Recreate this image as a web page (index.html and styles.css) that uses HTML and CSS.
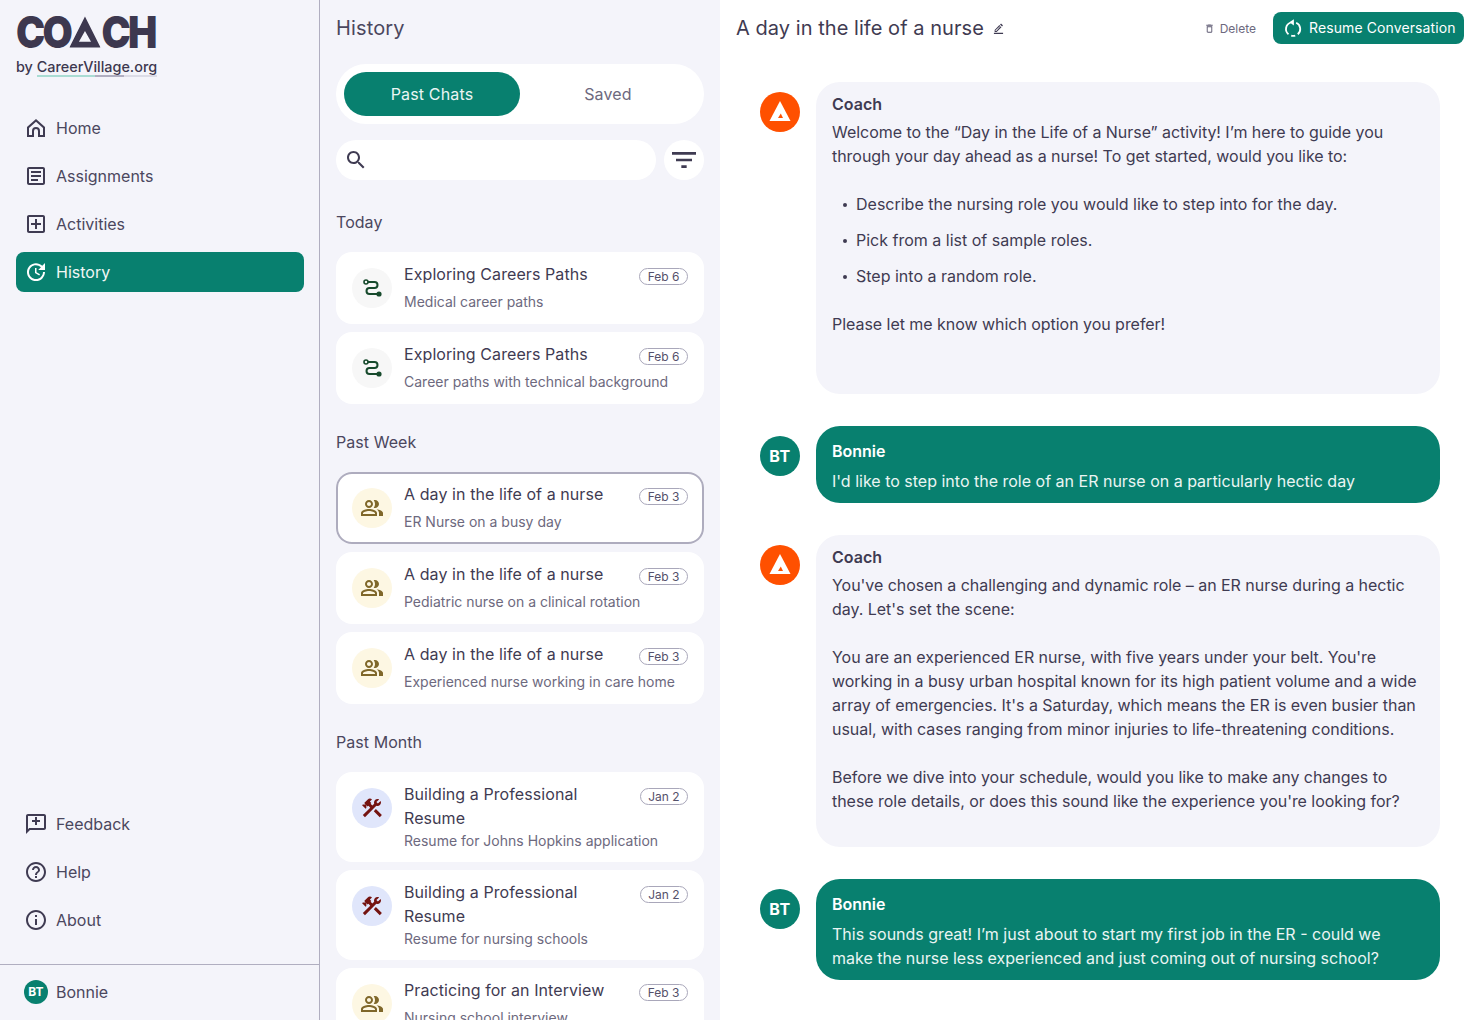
FILE: index.html
```html
<!DOCTYPE html>
<html lang="en">

<head>
    <meta charset="UTF-8">
    <meta name="viewport" content="width=device-width, initial-scale=1.0">
    <title>Coach</title>
    <link rel="stylesheet" href="styles.css">
</head>

<body>
    <!-- shared icons -->
    <svg class="sprite" xmlns="http://www.w3.org/2000/svg">
        <symbol id="i-route" viewBox="0 0 24 24">
            <circle cx="6" cy="6" r="2" fill="none" stroke="currentColor" stroke-width="1.6" />
            <path d="M8 6h6.5a3 3 0 0 1 0 6h-5a3 3 0 0 0 0 6H17" fill="none" stroke="currentColor" stroke-width="2" />
            <circle cx="19" cy="18" r="2.6" fill="currentColor" />
        </symbol>
        <symbol id="i-people" viewBox="0 0 24 24">
            <path fill="currentColor"
                d="M16.67 13.13C18.04 14.06 19 15.32 19 17v3h4v-3c0-2.18-3.57-3.47-6.33-3.87zM15 12c2.21 0 4-1.79 4-4s-1.79-4-4-4c-.47 0-.91.1-1.33.24C14.5 5.27 15 6.58 15 8s-.5 2.73-1.33 3.76c.42.14.86.24 1.33.24zM9 12c2.21 0 4-1.79 4-4s-1.79-4-4-4-4 1.79-4 4 1.79 4 4 4zm0-6c1.1 0 2 .9 2 2s-.9 2-2 2-2-.9-2-2 .9-2 2-2zM9 13c-2.67 0-8 1.34-8 4v3h16v-3c0-2.66-5.33-4-8-4zm6 5H3v-.99C3.2 16.29 6.3 15 9 15s5.8 1.29 6 2v1z" />
        </symbol>
        <symbol id="i-tools" viewBox="0 0 24 24">
            <path fill="currentColor"
                d="m13.78 15.17 2.12-2.12 6 6-2.12 2.12zM17.5 10c1.93 0 3.5-1.57 3.5-3.5 0-.58-.16-1.12-.41-1.6l-2.7 2.7-1.49-1.49 2.7-2.7c-.48-.25-1.02-.41-1.6-.41C15.57 3 14 4.57 14 6.5c0 .41.08.8.21 1.16l-1.85 1.85-1.78-1.78.71-.71-1.41-1.41L12 3.49c-1.17-1.17-3.07-1.17-4.24 0L4.22 7.03l1.41 1.41H2.81l-.71.71 3.54 3.54.71-.71V9.15l1.41 1.41.71-.71 1.78 1.78-7.41 7.41 2.12 2.12L16.34 9.79c.36.13.75.21 1.16.21z" />
        </symbol>
        <symbol id="i-coach" viewBox="0 0 40 40">
            <circle cx="20" cy="20" r="20" fill="#ff5000" />
            <path fill="#fff" d="M20 9 30.500 29h-21z" />
            <path fill="#ff5000" d="M20.800 21.500 23 26h-5z" />
        </symbol>
    </svg>

    <aside class="sidebar">
        <div class="logo">
            <div class="logo-word">CO<svg class="logo-a" viewBox="0 0 36 32" role="img" aria-label="A"><path fill-rule="evenodd" d="M18 0 36 32H0zM18 15 11 26h14z" /></svg>CH</div>
            <div class="logo-by">by <span class="logo-org">CareerVillage.org</span></div>
        </div>

        <nav class="nav">
            <a class="nav-item"><svg viewBox="0 0 24 24"><path fill-rule="evenodd" d="M12 3 3 11v10h7v-6a2 2 0 0 1 4 0v6h7V11zM19 19h-3v-4a4 4 0 0 0-8 0v4H5v-7.100l7-6.200 7 6.200z" /></svg>Home</a>
            <a class="nav-item"><svg viewBox="0 0 24 24"><path d="M19 5v14H5V5h14m0-2H5c-1.100 0-2 .9-2 2v14c0 1.100.9 2 2 2h14c1.100 0 2-.9 2-2V5c0-1.100-.9-2-2-2zM14 17H7v-2h7v2zm3-4H7v-2h10v2zm0-4H7V7h10v2z" /></svg>Assignments</a>
            <a class="nav-item"><svg viewBox="0 0 24 24"><path d="M19 3H5c-1.110 0-2 .9-2 2v14c0 1.100.89 2 2 2h14c1.100 0 2-.9 2-2V5c0-1.100-.9-2-2-2zm0 16H5V5h14v14zm-8-2h2v-4h4v-2h-4V7h-2v4H7v2h4z" /></svg>Activities</a>
            <a class="nav-item active"><svg viewBox="0 0 24 24"><path d="M21 10.120h-6.780l2.740-2.820c-2.730-2.700-7.150-2.800-9.880-.1-2.730 2.710-2.730 7.080 0 9.790s7.150 2.710 9.880 0C18.320 15.650 19 14.080 19 12.100h2c0 1.980-.88 4.550-2.640 6.290-3.510 3.480-9.210 3.480-12.720 0-3.500-3.470-3.530-9.110-.02-12.580s9.140-3.470 12.650 0L21 3v7.12zM12.500 8v4.250l3.500 2.080-.72 1.210L11 13V8h1.500z" /></svg>History</a>
        </nav>

        <nav class="nav nav-bottom">
            <a class="nav-item"><svg viewBox="0 0 24 24"><path d="M20 2H4c-1.100 0-2 .9-2 2v18l4-4h14c1.100 0 2-.9 2-2V4c0-1.100-.9-2-2-2zm0 14H5.170L4 17.170V4h16v12zM11 5h2v3h3v2h-3v3h-2v-3H8V8h3z" /></svg>Feedback</a>
            <a class="nav-item"><svg viewBox="0 0 24 24"><path d="M11 18h2v-2h-2v2zm1-16C6.480 2 2 6.480 2 12s4.480 10 10 10 10-4.480 10-10S17.520 2 12 2zm0 18c-4.410 0-8-3.590-8-8s3.590-8 8-8 8 3.590 8 8-3.590 8-8 8zm0-14c-2.210 0-4 1.790-4 4h2c0-1.100.9-2 2-2s2 .9 2 2c0 2-3 1.750-3 5h2c0-2.250 3-2.500 3-5 0-2.210-1.790-4-4-4z" /></svg>Help</a>
            <a class="nav-item"><svg viewBox="0 0 24 24"><path d="M11 7h2v2h-2zm0 4h2v6h-2zm1-9C6.480 2 2 6.480 2 12s4.480 10 10 10 10-4.480 10-10S17.520 2 12 2zm0 18c-4.410 0-8-3.590-8-8s3.590-8 8-8 8 3.590 8 8-3.590 8-8 8z" /></svg>About</a>
        </nav>

        <div class="user">
            <span class="user-avatar">BT</span>Bonnie
        </div>
    </aside>

    <section class="history">
        <h2 class="history-title">History</h2>

        <div class="tabs">
            <button class="tab active">Past Chats</button>
            <button class="tab">Saved</button>
        </div>

        <div class="search-row">
            <div class="search">
                <svg viewBox="0 0 24 24"><path d="M15.500 14h-.79l-.28-.27C15.410 12.590 16 11.110 16 9.500 16 5.910 13.090 3 9.500 3S3 5.910 3 9.500 5.910 16 9.500 16c1.610 0 3.090-.59 4.230-1.570l.27.28v.79l5 4.990L20.490 19l-4.990-5zm-6 0C7.010 14 5 11.990 5 9.500S7.010 5 9.500 5 14 7.010 14 9.500 11.990 14 9.500 14z" /></svg>
            </div>
            <div class="filter">
                <svg viewBox="0 0 24 24"><path d="M10 18h4v-2h-4v2zM3 6v2h18V6H3zm3 7h12v-2H6v2z" /></svg>
            </div>
        </div>

        <h3 class="group-title">Today</h3>
        <div class="cards">
            <div class="card">
                <span class="card-icon route"><svg><use href="#i-route" /></svg></span>
                <div class="card-body">
                    <div class="card-top"><span class="card-title">Exploring Careers Paths</span><span class="date">Feb 6</span></div>
                    <div class="card-sub">Medical career paths</div>
                </div>
            </div>
            <div class="card">
                <span class="card-icon route"><svg><use href="#i-route" /></svg></span>
                <div class="card-body">
                    <div class="card-top"><span class="card-title">Exploring Careers Paths</span><span class="date">Feb 6</span></div>
                    <div class="card-sub">Career paths with technical background</div>
                </div>
            </div>
        </div>

        <h3 class="group-title">Past Week</h3>
        <div class="cards">
            <div class="card selected">
                <span class="card-icon people"><svg><use href="#i-people" /></svg></span>
                <div class="card-body">
                    <div class="card-top"><span class="card-title">A day in the life of a nurse</span><span class="date">Feb 3</span></div>
                    <div class="card-sub">ER Nurse on a busy day</div>
                </div>
            </div>
            <div class="card">
                <span class="card-icon people"><svg><use href="#i-people" /></svg></span>
                <div class="card-body">
                    <div class="card-top"><span class="card-title">A day in the life of a nurse</span><span class="date">Feb 3</span></div>
                    <div class="card-sub">Pediatric nurse on a clinical rotation</div>
                </div>
            </div>
            <div class="card">
                <span class="card-icon people"><svg><use href="#i-people" /></svg></span>
                <div class="card-body">
                    <div class="card-top"><span class="card-title">A day in the life of a nurse</span><span class="date">Feb 3</span></div>
                    <div class="card-sub">Experienced nurse working in care home</div>
                </div>
            </div>
        </div>

        <h3 class="group-title">Past Month</h3>
        <div class="cards">
            <div class="card tall">
                <span class="card-icon tools"><svg><use href="#i-tools" /></svg></span>
                <div class="card-body">
                    <div class="card-top"><span class="card-title">Building a Professional Resume</span><span class="date">Jan 2</span></div>
                    <div class="card-sub">Resume for Johns Hopkins application</div>
                </div>
            </div>
            <div class="card tall">
                <span class="card-icon tools"><svg><use href="#i-tools" /></svg></span>
                <div class="card-body">
                    <div class="card-top"><span class="card-title">Building a Professional Resume</span><span class="date">Jan 2</span></div>
                    <div class="card-sub">Resume for nursing schools</div>
                </div>
            </div>
            <div class="card">
                <span class="card-icon people"><svg><use href="#i-people" /></svg></span>
                <div class="card-body">
                    <div class="card-top"><span class="card-title">Practicing for an Interview</span><span class="date">Feb 3</span></div>
                    <div class="card-sub">Nursing school interview</div>
                </div>
            </div>
        </div>
    </section>

    <main class="chat">
        <header class="chat-head">
            <h1 class="chat-title">A day in the life of a nurse</h1>
            <svg class="edit" viewBox="0 0 24 24"><path d="M22 24H2v-2.500h20zM14 4.600l4.400 4.400L8 19.500H3.600v-4.400zm1.800 1.800L5.500 16v1.600h1.600L16.600 7.200zM15.300 3.300l1.600-1.600c.4-.4 1-.4 1.400 0l3 3c.4.4.4 1 0 1.400l-1.600 1.600z" /></svg>
            <button class="delete">
                <svg viewBox="0 0 24 24"><path d="M6 19c0 1.100.9 2 2 2h8c1.100 0 2-.9 2-2V7H6zM8 9h8v10H8zm7.500-5-1-1h-5l-1 1H5v2h14V4z" /></svg>Delete
            </button>
            <button class="resume">
                <svg viewBox="0 0 20 20" fill="none" stroke="currentColor" stroke-width="2">
                    <path d="M7.500 3.900A7.600 7.600 0 0 0 5 17" />
                    <path d="M13.500 4.200A7.600 7.600 0 0 1 15.300 17" />
                    <path d="M8 18.500a7.600 7.600 0 0 0 4.500 0" />
                    <path d="M11 .2v7L6 3.700z" fill="currentColor" stroke="none" />
                </svg><span class="resume-text">Resume Conversation</span>
            </button>
        </header>

        <div class="messages">
            <div class="msg">
                <svg class="avatar"><use href="#i-coach" /></svg>
                <div class="bubble coach">
                    <div class="name">Coach</div>
                    <p>Welcome to the “Day in the Life of a Nurse” activity! I’m here to guide you through your day ahead as a nurse! To get started, would you like to:</p>
                    <ul>
                        <li>Describe the nursing role you would like to step into for the day.</li>
                        <li>Pick from a list of sample roles.</li>
                        <li>Step into a random role.</li>
                    </ul>
                    <p>Please let me know which option you prefer!</p>
                    <p class="blank"></p>
                </div>
            </div>

            <div class="msg">
                <span class="avatar avatar-user">BT</span>
                <div class="bubble user-msg">
                    <div class="name">Bonnie</div>
                    <p>I'd like to step into the role of an ER nurse on a particularly hectic day</p>
                </div>
            </div>

            <div class="msg">
                <svg class="avatar"><use href="#i-coach" /></svg>
                <div class="bubble coach">
                    <div class="name">Coach</div>
                    <p>You've chosen a challenging and dynamic role – an ER nurse during a hectic day. Let's set the scene:</p>
                    <p>You are an experienced ER nurse, with five years under your belt. You're working in a busy urban hospital known for its high patient volume and a wide array of emergencies. It's a Saturday, which means the ER is even busier than usual, with cases ranging from minor injuries to life-threatening conditions.</p>
                    <p>Before we dive into your schedule, would you like to make any changes to these role details, or does this sound like the experience you're looking for?</p>
                </div>
            </div>

            <div class="msg">
                <span class="avatar avatar-user">BT</span>
                <div class="bubble user-msg">
                    <div class="name">Bonnie</div>
                    <p>This sounds great! I’m just about to start my first job in the ER - could we make the nurse less experienced and just coming out of nursing school?</p>
                </div>
            </div>
        </div>
    </main>
</body>

</html>
```

FILE: styles.css
```css
* {
    box-sizing: border-box;
}

body {
    margin: 0;
    height: 100vh;
    display: flex;
    overflow: hidden;
    font-family: "Inter", "Liberation Sans", sans-serif;
    font-size: 16px;
    color: #3f3b52;
    background-color: #fff;
}

.sprite {
    display: none;
}

button {
    font-family: inherit;
    border: none;
    cursor: pointer;
}

/* sidebar */
.sidebar {
    width: 320px;
    flex-shrink: 0;
    height: 100%;
    display: flex;
    flex-direction: column;
    background-color: #f4f4fa;
    border-right: 1px solid #b0aec0;
}

.logo {
    padding: 16px 16px 0;
    height: 100px;
    color: #3d384f;
}

.logo-word {
    display: flex;
    align-items: center;
    height: 32px;
    font-size: 44px;
    line-height: 32px;
    font-weight: 900;
    letter-spacing: -3px;
    transform: scaleX(0.89);
    transform-origin: left center;
}

.logo-a {
    width: 35px;
    height: 32px;
    margin: 0 1px 0 -1px;
    fill: #3d384f;
}

.logo-by {
    margin-top: 9px;
    font-size: 14.4px;
    line-height: 20px;
    font-weight: 500;
}

.logo-org {
    border-bottom: 2px solid;
    border-image: linear-gradient(90deg, #a9dcd3 0 48%, #b0aec0 48% 72%, #dcdce6 72% 100%) 1;
}

.nav {
    display: flex;
    flex-direction: column;
    gap: 8px;
    padding: 8px 15px 0 16px;
}

.nav-bottom {
    margin-top: auto;
    padding-top: 0;
    padding-bottom: 24px;
}

.nav-item {
    height: 40px;
    display: flex;
    align-items: center;
    gap: 8px;
    padding-left: 8px;
    border-radius: 8px;
    font-size: 16px;
    color: #4b475e;
}

.nav-item svg {
    width: 24px;
    height: 24px;
    fill: #3f3b52;
}

.nav-item.active {
    background-color: #08806f;
    color: #f0f7f5;
}

.nav-item.active svg {
    fill: #fff;
}

.user {
    height: 56px;
    display: flex;
    align-items: center;
    gap: 8px;
    padding: 0 0 2px 24px;
    border-top: 1px solid #b0aec0;
    color: #4b475e;
}

.user-avatar {
    width: 24px;
    height: 24px;
    border-radius: 50%;
    display: flex;
    align-items: center;
    justify-content: center;
    background-color: #08806f;
    color: #fff;
    font-size: 12px;
    font-weight: 700;
}

/* history column */
.history {
    width: 400px;
    flex-shrink: 0;
    height: 100%;
    overflow: hidden;
    padding: 0 16px;
    background-color: #f4f4fa;
}

.history-title {
    margin: 0;
    height: 64px;
    padding-top: 14px;
    font-size: 20px;
    line-height: 28px;
    font-weight: 400;
    letter-spacing: 0.15px;
    color: #4b475e;
}

.tabs {
    height: 60px;
    display: flex;
    padding: 8px;
    border-radius: 30px;
    background-color: #fff;
}

.tab {
    width: 176px;
    height: 44px;
    border-radius: 22px;
    background: none;
    font-size: 16px;
    letter-spacing: 0.15px;
    color: #6d697e;
}

.tab.active {
    background-color: #08806f;
    color: #eaf5f3;
}

.search-row {
    display: flex;
    gap: 8px;
    margin-top: 16px;
}

.search {
    flex: 1;
    height: 40px;
    display: flex;
    align-items: center;
    padding-left: 8px;
    border-radius: 20px;
    background-color: #fff;
}

.search svg {
    width: 24px;
    height: 24px;
    fill: #3f3b52;
}

.filter {
    width: 40px;
    height: 40px;
    display: flex;
    align-items: center;
    justify-content: center;
    border-radius: 50%;
    background-color: #fff;
}

.filter svg {
    width: 32px;
    height: 32px;
    fill: #3f3b52;
}

.group-title {
    margin: 0;
    height: 72px;
    padding-top: 30px;
    font-size: 16px;
    line-height: 24px;
    font-weight: 400;
    letter-spacing: 0.05px;
    color: #4b475e;
}

.cards {
    display: flex;
    flex-direction: column;
    gap: 8px;
}

.cards + .group-title {
    height: 68px;
    padding-top: 26px;
}

.card {
    min-height: 72px;
    display: flex;
    align-items: center;
    gap: 12px;
    padding: 0 16px;
    border-radius: 16px;
    background-color: #fff;
}

.card.tall {
    align-items: flex-start;
}

.card.tall .card-icon {
    margin-top: 16px;
}

.card.tall .card-body {
    padding-bottom: 11px;
}

.card.selected {
    box-shadow: inset 0 0 0 2px #aeacbe;
}

.card-icon {
    width: 40px;
    height: 40px;
    flex-shrink: 0;
    display: flex;
    align-items: center;
    justify-content: center;
    border-radius: 50%;
}

.card-icon svg {
    width: 24px;
    height: 24px;
}

.route {
    background-color: #f7f7f7;
    color: #174a2c;
}

.people {
    background-color: #fdf7e3;
    color: #7f672a;
}

.tools {
    background-color: #e0e6fb;
    color: #741310;
}

.card-body {
    flex: 1;
    min-width: 0;
    padding: 10px 0 12px;
}

.card-top {
    min-height: 30px;
    display: flex;
    justify-content: space-between;
    align-items: flex-start;
    gap: 16px;
    padding-bottom: 1px;
}

.card-title {
    line-height: 24px;
    letter-spacing: 0.08px;
    color: #3f3b52;
}

.date {
    flex-shrink: 0;
    height: 17px;
    margin-top: 6px;
    padding: 0 7.5px;
    border: 1px solid #a9a7ba;
    border-radius: 9px;
    font-size: 12px;
    line-height: 15px;
    color: #55516a;
}

.card-sub {
    font-size: 14px;
    line-height: 20px;
    color: #6d697e;
}

/* chat */
.chat {
    flex: 1;
    min-width: 0;
    height: 100%;
    overflow: hidden;
    padding: 0 16px;
}

.chat-head {
    height: 82px;
    display: flex;
    align-items: flex-start;
    padding-top: 12px;
}

.chat-title {
    margin: 0;
    font-size: 20px;
    line-height: 32px;
    font-weight: 400;
    letter-spacing: 0.05px;
}

.edit {
    width: 11px;
    height: 11px;
    margin: 11px auto 0 9px;
    fill: #3f3b52;
}

.delete {
    height: 32px;
    display: flex;
    align-items: center;
    gap: 5px;
    padding: 0;
    margin-right: 17px;
    background: none;
    font-size: 12px;
    color: #6d697e;
}

.delete svg {
    width: 11px;
    height: 11px;
    fill: #5b5770;
}

.resume {
    width: 191px;
    height: 32px;
    display: flex;
    align-items: center;
    gap: 7px;
    padding: 0 0 0 11px;
    border-radius: 8px;
    background-color: #08806f;
    color: #fff;
    font-size: 14px;
}

.resume svg {
    width: 18px;
    height: 18px;
}

.resume-text {
    padding-bottom: 2px;
    letter-spacing: 0.1px;
}

.messages {
    display: flex;
    flex-direction: column;
    gap: 32px;
    padding: 0 24px;
}

.msg {
    display: flex;
    align-items: flex-start;
    gap: 16px;
}

.avatar {
    width: 40px;
    height: 40px;
    flex-shrink: 0;
    margin-top: 10px;
}

.avatar-user {
    display: flex;
    align-items: center;
    justify-content: center;
    border-radius: 50%;
    background-color: #08806f;
    color: #fff;
    font-weight: 700;
    letter-spacing: 0.5px;
}

.bubble {
    flex: 1;
    min-width: 0;
    border-radius: 24px;
    padding: 12px 16px 34px;
    line-height: 24px;
}

.bubble p {
    margin: 0 0 24px;
}

.bubble p:last-child {
    margin-bottom: 0;
}

.bubble .blank {
    height: 0;
}

.name {
    line-height: 20px;
    font-weight: 600;
}

.coach {
    background-color: #f4f4fa;
}

.coach p {
    letter-spacing: -0.04px;
}

.coach .name {
    margin-bottom: 6px;
}

.user-msg {
    /* right padding keeps the last message wrapping before "make" */
    padding: 15px 32px 10px 16px;
    background-color: #08806f;
    color: #eaf5f3;
}

.user-msg .name {
    margin-bottom: 8px;
    color: #fff;
}

.bubble ul {
    margin: 0 0 24px;
    padding-left: 24px;
    list-style: none;
}

.bubble li {
    margin-bottom: 12px;
}

.bubble li::before {
    content: "";
    display: inline-block;
    width: 4px;
    height: 4px;
    margin: 0 9px 3px -13px;
    border-radius: 50%;
    background-color: currentColor;
}

.bubble li:last-child {
    margin-bottom: 0;
}
```
